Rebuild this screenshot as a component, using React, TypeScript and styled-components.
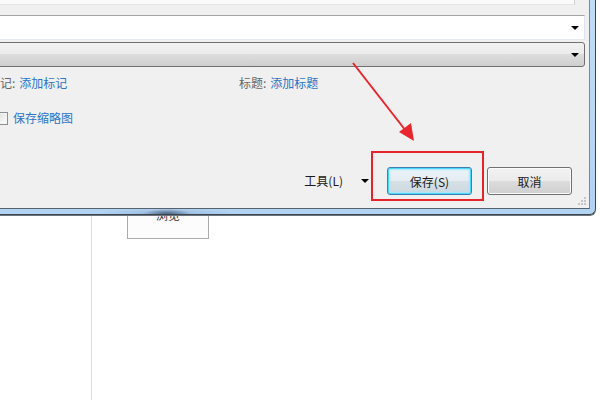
import React from "react";
import styled, { createGlobalStyle } from "styled-components";

const Global = createGlobalStyle`
  html, body { margin: 0; padding: 0; background: #ffffff; }
  body { font-family: "Noto Sans CJK SC", "Liberation Sans", sans-serif; font-size: 12px; }
`;

const Desktop = styled.div`
  position: relative;
  width: 600px;
  height: 400px;
  overflow: hidden;
  background: #ffffff;
`;

const BackPage = styled.div`
  display: flex;
  height: 400px;
`;

const SidePane = styled.div`
  width: 91px;
  border-right: 1px solid #dcdcdc;
`;

const MainPane = styled.div`
  flex: 1;
  padding: 196px 0 0 35px;
`;

const BrowseButton = styled.div`
  box-sizing: border-box;
  width: 82px;
  height: 43px;
  padding-top: 10px;
  border: 1px solid #ababab;
  background: #fcfcfc;
  color: #333;
  text-align: center;
  line-height: 16px;
`;

const Window = styled.div`
  position: absolute;
  left: -40px;
  top: -30px;
  width: 636px;
  box-sizing: border-box;
  padding: 0 5px 5px 0;
  border-right: 1px solid #3d4650;
  border-bottom: 1px solid #3d4650;
  border-bottom-right-radius: 6px;
  box-shadow: 0 1px 0 #6b737c;
  background:
    radial-gradient(ellipse 24px 5px at 207px 100%, rgba(70, 95, 120, 0.95), rgba(120, 160, 200, 0) 100%),
    radial-gradient(ellipse 70px 6px at 207px 100%, rgba(140, 175, 210, 0.8), rgba(140, 175, 210, 0) 100%),
    linear-gradient(#c3ddf6, #b3d3f3);
`;

const Client = styled.div`
  position: relative;
  display: flex;
  flex-direction: column;
  height: 238px;
  box-sizing: content-box;
  background: #f0f0f0;
  border-right: 1px solid #7b8894;
  border-bottom: 1px solid #56626e;
`;

const TopPane = styled.div`
  box-sizing: border-box;
  height: 35px;
  margin-right: 14px;
  background: #fafafa;
  border-right: 1px solid #cfcfcf;
  border-bottom: 1px solid #e6e6e6;
`;

const ComboBox = styled.div<{ $button?: boolean; $gap: number }>`
  box-sizing: border-box;
  height: 25px;
  margin: ${(p) => p.$gap}px 4px 0 0;
  display: flex;
  align-items: center;
  justify-content: flex-end;
  padding-right: 5px;
  ${(p) =>
    p.$button
      ? `
    border: 1px solid #707070;
    border-radius: 3px;
    background: linear-gradient(#f2f2f2 0%, #ebebeb 50%, #dddddd 50%, #cfcfcf 100%);
  `
      : `
    border: 1px solid #e2e3ea;
    border-top-color: #a5a5a5;
    border-bottom-color: #e3e9ef;
    background: #ffffff;
  `}
`;

const DropArrow = styled.span`
  width: 0;
  height: 0;
  border-left: 4px solid transparent;
  border-right: 4px solid transparent;
  border-top: 4px solid #000;
`;

const FieldRow = styled.div`
  display: flex;
  height: 16px;
  margin-top: 8px;
  padding-left: 28px;
  line-height: 16px;
`;

const Field = styled.div<{ $width?: number }>`
  display: flex;
  gap: 4px;
  white-space: nowrap;
  ${(p) => (p.$width ? `width: ${p.$width}px;` : "")}
`;

const Label = styled.span`
  color: #666666;
`;

const Link = styled.span`
  color: #2a74c9;
`;

const CheckRow = styled.div`
  display: flex;
  align-items: center;
  gap: 5px;
  height: 16px;
  margin-top: 19px;
  padding-left: 35px;
  line-height: 16px;
`;

const CheckBox = styled.span`
  box-sizing: border-box;
  width: 13px;
  height: 13px;
  border: 1px solid #8e8f8f;
  background: linear-gradient(135deg, #dcdcdc, #ffffff);
  box-shadow: inset 0 0 0 1px #f4f4f4;
`;

const ButtonRow = styled.div`
  display: flex;
  align-items: center;
  justify-content: flex-end;
  gap: 15px;
  margin-top: 41px;
  padding-right: 17px;
`;

const ToolsMenu = styled.div`
  display: flex;
  align-items: center;
  gap: 18px;
  margin-right: 3px;
  color: #1a1a1a;
  line-height: 16px;
`;

const Button = styled.div<{ $default?: boolean }>`
  box-sizing: border-box;
  width: 85px;
  height: 28px;
  border-radius: 3px;
  display: flex;
  align-items: center;
  justify-content: center;
  color: #1a1a1a;
  ${(p) =>
    p.$default
      ? `
    border: 1px solid #3c7fb1;
    box-shadow: inset 0 0 0 1px #48d8fb, inset 0 0 2px 2px #a8e4fb;
    background: linear-gradient(#eef4f8 0%, #e4ecf2 50%, #d6e0e7 50%, #cdd8df 100%);
  `
      : `
    border: 1px solid #707070;
    box-shadow: inset 0 0 0 1px #fbfbfb;
    background: linear-gradient(#f2f2f2 0%, #ebebeb 50%, #dddddd 50%, #cfcfcf 100%);
  `}
`;

const Grip = styled.svg`
  position: absolute;
  right: 2px;
  bottom: 2px;
`;

const Highlight = styled.div`
  position: absolute;
  left: 371px;
  top: 151px;
  width: 113px;
  height: 50px;
  box-sizing: border-box;
  border: 2px solid #e5232a;
`;

const ArrowOverlay = styled.svg`
  position: absolute;
  left: 0;
  top: 0;
  pointer-events: none;
`;

export default function App() {
  const gripDots = [
    [7, 1],
    [4, 4],
    [7, 4],
    [1, 7],
    [4, 7],
    [7, 7],
  ];
  return (
    <>
      <Global />
      <Desktop>
        <BackPage>
          <SidePane />
          <MainPane>
            <BrowseButton>浏览</BrowseButton>
          </MainPane>
        </BackPage>

        <Window>
          <Client>
            <TopPane />
            <ComboBox $gap={10}>
              <DropArrow />
            </ComboBox>
            <ComboBox $gap={2} $button>
              <DropArrow />
            </ComboBox>
            <FieldRow>
              <Field $width={251}>
                <Label>标记:</Label>
                <Link>添加标记</Link>
              </Field>
              <Field>
                <Label>标题:</Label>
                <Link>添加标题</Link>
              </Field>
            </FieldRow>
            <CheckRow>
              <CheckBox />
              <Link>保存缩略图</Link>
            </CheckRow>
            <ButtonRow>
              <ToolsMenu>
                <span>工具(L)</span>
                <DropArrow />
              </ToolsMenu>
              <Button $default>保存(S)</Button>
              <Button>取消</Button>
            </ButtonRow>
            <Grip width="10" height="10" viewBox="0 0 10 10">
              {gripDots.map(([x, y], i) => (
                <rect key={i} x={x} y={y} width="2" height="2" fill="#c6c6c6" />
              ))}
            </Grip>
          </Client>
        </Window>

        <Highlight />
        <ArrowOverlay width="600" height="400" viewBox="0 0 600 400">
          <line x1="353" y1="63" x2="406" y2="131" stroke="#e8262d" strokeWidth="2" />
          <polygon points="414,141 399,132 411,123" fill="#e8262d" />
        </ArrowOverlay>
      </Desktop>
    </>
  );
}
